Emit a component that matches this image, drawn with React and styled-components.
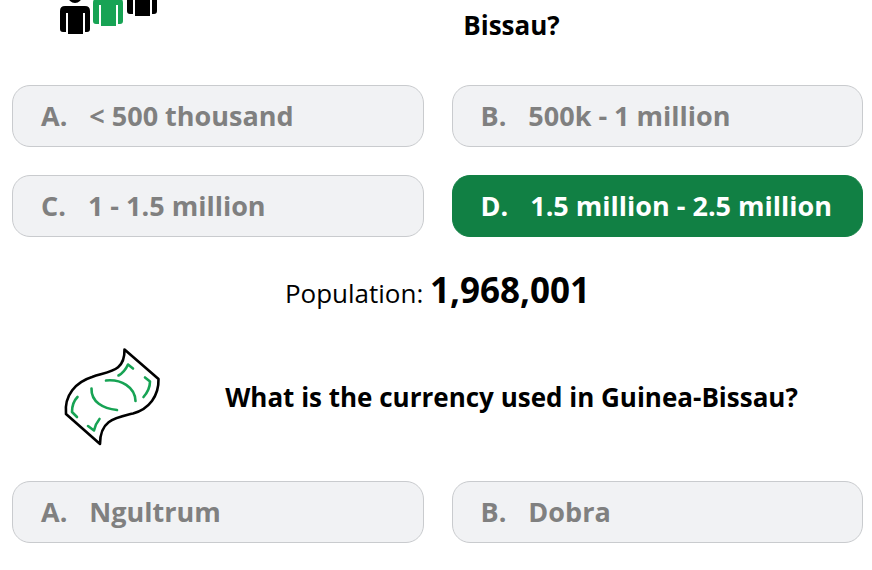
import React from 'react'

import styled, { createGlobalStyle } from 'styled-components'

const questions = [
  {
    id: 'population',
    title: 'Bissau?',
    options: ['< 500 thousand', '500k - 1 million', '1 - 1.5 million', '1.5 million - 2.5 million'],
    correct: 3,
    fact: { label: 'Population:', value: '1,968,001' }
  },
  {
    id: 'currency',
    title: 'What is the currency used in Guinea-Bissau?',
    options: ['Ngultrum', 'Dobra']
  }
]

const personPath =
  'M5 6h20q5 0 5 5v18q0 3-3 3h-2V13h-2v21H8V13H6v19H3q-3 0-3-3V11q0-5 5-5z'

const PeopleIcon = () => (
  <svg width="98" height="36" viewBox="62 0 98 36" aria-hidden="true">
    <g transform="translate(60 0)">
      <circle cx="15" cy="-4" r="7" />
      <path d={personPath} />
    </g>
    <g transform="translate(93 -8)" fill="#17a354">
      <path d={personPath} />
    </g>
    <g transform="translate(127 -18)">
      <path d={personPath} />
    </g>
  </svg>
)

const BanknoteIcon = () => (
  <svg
    width="98"
    height="98"
    viewBox="62 348 98 98"
    fill="none"
    strokeWidth="2.6"
    strokeLinecap="round"
    strokeLinejoin="round"
    aria-hidden="true">
    <path
      stroke="#000"
      d="M124.500 349.500L158.500 379C159 396 149 409 133 413.500C115 418 100 420 100 444L66 414C64 395 76 382 92 377C109 371 125 372 124.500 349.500z" />
    <g stroke="#17a354">
      <path d="M106 380.500C121 379 135 387 135.500 401" />
      <path d="M91.500 388.500C91 402 103 408.500 117 410" />
      <path d="M118.500 375.500C123 373 126 369 128 364.500L133 368.500" />
      <path d="M145 377.500L150 381.500C150 388 147 393 143.500 397" />
      <path d="M77.500 397C73.500 401 72 406 72 412L77 417" />
      <path d="M88 426L94 430.500C95 426 97 422 99.500 419" />
    </g>
  </svg>
)

const icons = {
  population: PeopleIcon,
  currency: BanknoteIcon
}

const Question = ({ question }) => {
  const Icon = icons[question.id]

  return (
    <Section>
      <Header>
        <Picture>
          <Icon />
        </Picture>
        <Title>{question.title}</Title>
      </Header>
      <Options>
        {question.options.map((option, index) => (
          <Option key={option} type="button" $correct={index === question.correct}>
            <Letter>{'ABCD'[index]}.</Letter>
            <span>{option}</span>
          </Option>
        ))}
      </Options>
      {question.fact && (
        <Fact>
          {question.fact.label} <strong>{question.fact.value}</strong>
        </Fact>
      )}
    </Section>
  )
}

const App = () => {
  return (
    <>
      <GlobalStyle />
      <Quiz>
        {questions.map((question) => (
          <Question key={question.id} question={question} />
        ))}
      </Quiz>
    </>
  )
}

export default App

/* ------- STYLING ------- */

const GlobalStyle = createGlobalStyle`
  * {
    box-sizing: border-box;
  }

  body {
    margin: 0;
    background: #fff;
    color: #000;
    font-family: "Open Sans", "Noto Sans", sans-serif;
  }
`
const Quiz = styled.main`
  padding: 0 9px 24px 12px;
`
const Section = styled.section`
  display: flex;
  flex-direction: column;
`
const Header = styled.header`
  display: flex;
  margin-bottom: 35px;
  min-height: 50px;
`
const Picture = styled.div`
  flex: 0 0 148px;
  padding-left: 50px;

  svg {
    display: block;
    overflow: visible;
  }
`
const Title = styled.h2`
  flex: 1;
  align-self: center;
  margin: 0;
  font-size: 26px;
  font-weight: 700;
  line-height: 36px;
  text-align: center;
`
const Options = styled.div`
  display: grid;
  grid-template-columns: 1fr 1fr;
  gap: 28px;
`
const Option = styled.button`
  display: flex;
  align-items: center;
  gap: 22px;
  min-height: 62px;
  padding: 8px 28px;
  border: 1px solid ${(props) => (props.$correct ? '#118044' : '#c9cbce')};
  border-radius: 18px;
  background: ${(props) => (props.$correct ? '#118044' : '#f1f2f4')};
  color: ${(props) => (props.$correct ? '#fff' : '#808080')};
  font-family: inherit;
  font-size: 27px;
  font-weight: 700;
  line-height: 36px;
  text-align: left;
  cursor: pointer;
`
const Letter = styled.span`
  flex: none;
`
const Fact = styled.p`
  margin: 32px 0 31px;
  font-size: 26px;
  font-weight: 400;
  line-height: 48px;
  text-align: center;

  strong {
    font-size: 35px;
    font-weight: 700;
    line-height: 36px;
  }
`
